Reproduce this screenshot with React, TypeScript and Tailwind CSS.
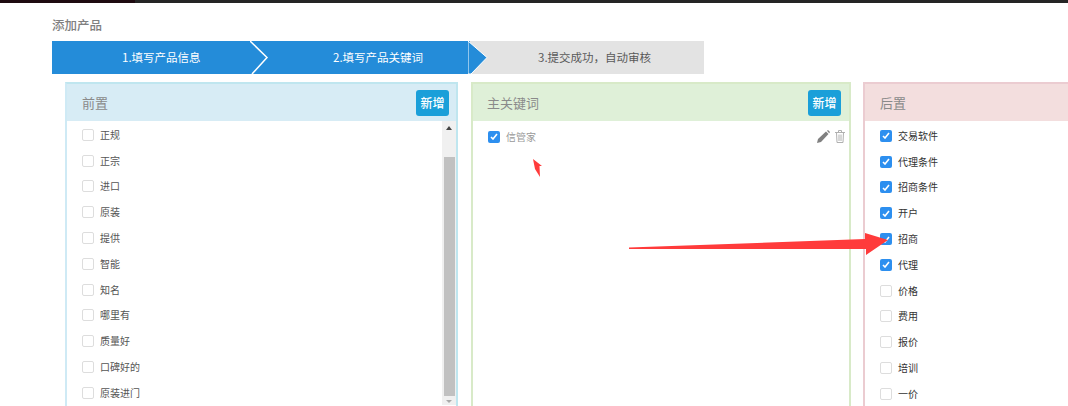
import React from "react";

const font = "font-['Noto_Sans_CJK_SC','Liberation_Sans',sans-serif]";

const before = ["正规", "正宗", "进口", "原装", "提供", "智能", "知名", "哪里有", "质量好", "口碑好的", "原装进门"];
const after = [
  { name: "交易软件", on: true },
  { name: "代理条件", on: true },
  { name: "招商条件", on: true },
  { name: "开户", on: true },
  { name: "招商", on: true },
  { name: "代理", on: true },
  { name: "价格", on: false },
  { name: "费用", on: false },
  { name: "报价", on: false },
  { name: "培训", on: false },
  { name: "一价", on: false },
];

function Check({ on }: { on: boolean }) {
  if (!on) {
    return <span className="w-3 h-3 shrink-0 rounded-[2px] border border-[#dddddd] bg-white" />;
  }
  return (
    <span className="w-3 h-3 shrink-0 rounded-[2px] bg-[#2d8fef] flex items-center justify-center">
      <svg width="8" height="7" viewBox="0 0 8 7">
        <path d="M1 4l2 2 4-5" fill="none" stroke="#fff" strokeWidth="1.6" />
      </svg>
    </span>
  );
}

function Row({ name, on, color }: { name: string; on: boolean; color: string }) {
  return (
    <div className="h-[25.8px] flex items-center gap-[6px]">
      <Check on={on} />
      <span className={`text-[10px] leading-none ${color}`}>{name}</span>
    </div>
  );
}

function PanelHead({ title, add, inset, right }: { title: string; add?: boolean; inset?: string; right?: string }) {
  return (
    <div className={`h-[37px] shrink-0 flex items-center justify-between ${right ?? "pr-[7px]"} ${inset ?? "pl-[15px]"}`}>
      <span className="text-[13px] text-[#8a8a8a]">{title}</span>
      {add && (
        <button className="w-[33px] h-[26px] rounded-[3px] bg-[#1a9fd9] text-white text-[12px] font-medium">
          新增
        </button>
      )}
    </div>
  );
}

function Pencil() {
  return (
    <svg width="13" height="13" viewBox="0 0 13 13">
      <path d="M0 13L1 9L9 1.5L11.5 4L4 12Z" fill="#808080" />
      <path d="M10 .8L11 0L13 2L12.2 3.2Z" fill="#808080" />
    </svg>
  );
}

function Trash() {
  return (
    <svg width="10" height="13" viewBox="0 0 10 13" fill="none" stroke="#b0b0b0">
      <path d="M0 2.5H10M3.5 2.5V.5H6.5V2.5" />
      <path d="M1.5 2.5L2 12.5H8L8.5 2.5" />
      <path d="M4 4.5V11M6 4.5V11" />
    </svg>
  );
}

function Arrows() {
  return (
    <svg className="absolute left-0 top-0 z-20 pointer-events-none" width="1068" height="406" viewBox="0 0 1068 406">
      <polygon points="629,247.5 865,239 865,233 888,240 866,255 866,249 629,249" fill="#ff3b3b" />
      <polygon points="533,159 542,166 539.5,166 540,177 535,169" fill="#ff3b3b" />
    </svg>
  );
}

export default function App() {
  return (
    <div className={`relative w-[1068px] h-[406px] overflow-hidden bg-white ${font}`}>
      {/* top bar */}
      <div className="h-[3px] flex bg-[#252525]">
        <div className="w-[135px] bg-[#1e0a10]" />
      </div>

      <div className="pl-[52px] pt-[14px]">
        <h1 className="h-[24px] text-[12.5px] leading-[16px] font-medium text-[#808080]">添加产品</h1>

        {/* steps */}
        <div className="flex w-[652px] h-[33px] text-[11.5px]">
          <div className="relative w-[200px] bg-[#248cd9] text-white flex items-center pl-[70px]">
            1.填写产品信息
            <svg className="absolute right-[-17px] top-0 z-10" width="19" height="33" viewBox="0 0 19 33">
              <path d="M0 0L17 16.5L2 33" fill="none" stroke="#fff" strokeWidth="1.5" />
            </svg>
          </div>
          <div className="relative w-[218px] bg-[#248cd9] text-white flex items-center pl-[81px]">
            2.填写产品关键词
            <svg className="absolute right-[-18px] top-0 z-10" width="20" height="33" viewBox="0 0 20 33">
              <path d="M0 0L19 16.5L3 33L0 33Z" fill="#248cd9" stroke="#fff" strokeWidth="1" />
            </svg>
          </div>
          <div className="flex-1 bg-[#e3e3e3] text-[#5a5a5a] flex items-center pl-[68px]">
            3.提交成功，自动审核
          </div>
        </div>

        {/* panels */}
        <div className="flex mt-[8px] ml-[13px] w-[1100px] h-[330px]">
          <section className="w-[393px] shrink-0 flex flex-col border-2 border-b-0 border-[#bfe6ef] border-l-[#cfeaf5] mr-[13px]">
            <div className="bg-[#d7ecf5]">
              <PanelHead title="前置" add />
            </div>
            <div className="flex flex-1 min-h-0">
              <div className="flex-1 pl-[15px] pt-[1px]">
                {before.map((name) => (
                  <Row key={name} name={name} on={false} color="text-[#555555]" />
                ))}
              </div>
              <div className="w-[14px] h-[284px] bg-[#f0f0f0] flex flex-col items-center">
                <div className="h-[36px] pt-[5px]">
                  <div className="w-0 h-0 border-x-[3px] border-x-transparent border-b-[4px] border-b-[#444444]" />
                </div>
                <div className="w-[11px] h-[239px] bg-[#c1c1c1]" />
                <div className="pt-[4px]">
                  <div className="w-0 h-0 border-x-[3px] border-x-transparent border-t-[3px] border-t-[#aaaaaa]" />
                </div>
              </div>
            </div>
          </section>

          <section className="w-[380px] shrink-0 flex flex-col border-2 border-b-0 border-[#d8eac8] mr-[12px]">
            <div className="bg-[#dff0d8]">
              <PanelHead title="主关键词" add inset="pl-[14px]" right="pr-[8px]" />
            </div>
            <div className="flex items-start justify-between pl-[15px] pr-[4px] pt-[3px]">
              <Row name="信管家" on color="text-[#999999]" />
              <div className="flex items-center gap-[5px] h-[25px]">
                <Pencil />
                <Trash />
              </div>
            </div>
          </section>

          <section className="w-[260px] shrink-0 flex flex-col border-2 border-b-0 border-[#ebccd1]">
            <div className="bg-[#f3dede]">
              <PanelHead title="后置" />
            </div>
            <div className="pl-[15px] pt-[2px]">
              {after.map((item) => (
                <Row key={item.name} name={item.name} on={item.on} color="text-[#333333]" />
              ))}
            </div>
          </section>
        </div>
      </div>

      <Arrows />
    </div>
  );
}
